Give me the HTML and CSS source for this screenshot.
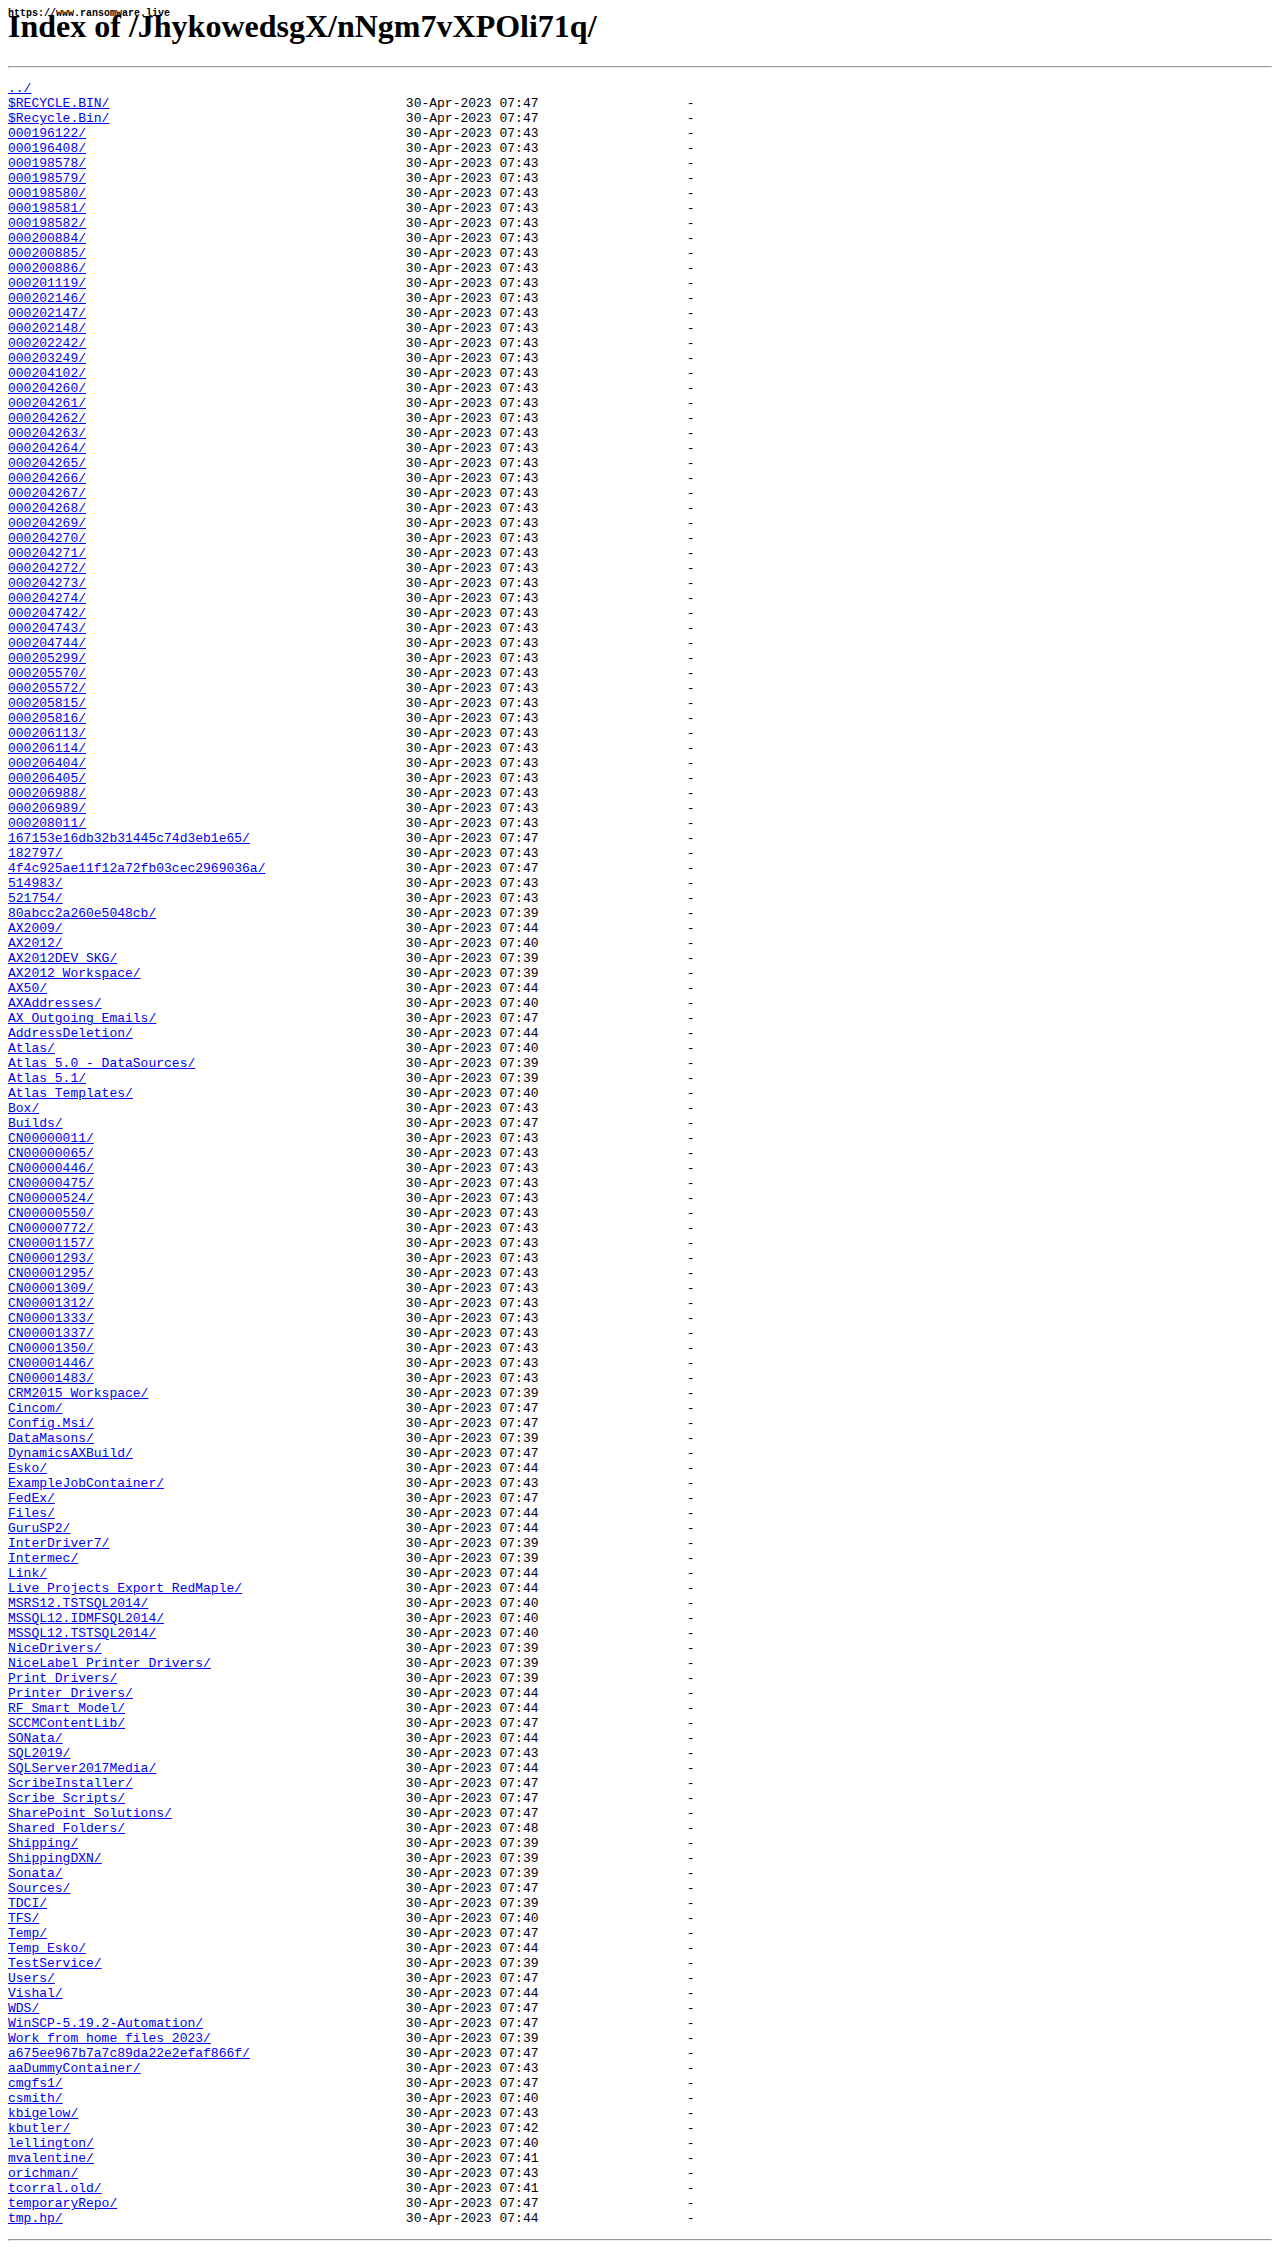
FILE: index.html
```html
<!DOCTYPE html>
<html lang="en">

<head>
    <meta charset="UTF-8">
    <title>Index of /JhykowedsgX/nNgm7vXPOli71q/</title>
    <link rel="stylesheet" href="styles.css">
</head>

<body>

    <div class="stamp">https://www.ransomware.live</div>

    <h1>Index of /JhykowedsgX/nNgm7vXPOli71q/</h1>
    <hr>

    <div class="listing">
        <div class="row"><a href="../">../</a></div>
        <div class="row"><a href="#">$RECYCLE.BIN/</a><span>30-Apr-2023 07:47</span><span class="size">-</span></div>
        <div class="row"><a href="#">$Recycle.Bin/</a><span>30-Apr-2023 07:47</span><span class="size">-</span></div>
        <div class="row"><a href="#">000196122/</a><span>30-Apr-2023 07:43</span><span class="size">-</span></div>
        <div class="row"><a href="#">000196408/</a><span>30-Apr-2023 07:43</span><span class="size">-</span></div>
        <div class="row"><a href="#">000198578/</a><span>30-Apr-2023 07:43</span><span class="size">-</span></div>
        <div class="row"><a href="#">000198579/</a><span>30-Apr-2023 07:43</span><span class="size">-</span></div>
        <div class="row"><a href="#">000198580/</a><span>30-Apr-2023 07:43</span><span class="size">-</span></div>
        <div class="row"><a href="#">000198581/</a><span>30-Apr-2023 07:43</span><span class="size">-</span></div>
        <div class="row"><a href="#">000198582/</a><span>30-Apr-2023 07:43</span><span class="size">-</span></div>
        <div class="row"><a href="#">000200884/</a><span>30-Apr-2023 07:43</span><span class="size">-</span></div>
        <div class="row"><a href="#">000200885/</a><span>30-Apr-2023 07:43</span><span class="size">-</span></div>
        <div class="row"><a href="#">000200886/</a><span>30-Apr-2023 07:43</span><span class="size">-</span></div>
        <div class="row"><a href="#">000201119/</a><span>30-Apr-2023 07:43</span><span class="size">-</span></div>
        <div class="row"><a href="#">000202146/</a><span>30-Apr-2023 07:43</span><span class="size">-</span></div>
        <div class="row"><a href="#">000202147/</a><span>30-Apr-2023 07:43</span><span class="size">-</span></div>
        <div class="row"><a href="#">000202148/</a><span>30-Apr-2023 07:43</span><span class="size">-</span></div>
        <div class="row"><a href="#">000202242/</a><span>30-Apr-2023 07:43</span><span class="size">-</span></div>
        <div class="row"><a href="#">000203249/</a><span>30-Apr-2023 07:43</span><span class="size">-</span></div>
        <div class="row"><a href="#">000204102/</a><span>30-Apr-2023 07:43</span><span class="size">-</span></div>
        <div class="row"><a href="#">000204260/</a><span>30-Apr-2023 07:43</span><span class="size">-</span></div>
        <div class="row"><a href="#">000204261/</a><span>30-Apr-2023 07:43</span><span class="size">-</span></div>
        <div class="row"><a href="#">000204262/</a><span>30-Apr-2023 07:43</span><span class="size">-</span></div>
        <div class="row"><a href="#">000204263/</a><span>30-Apr-2023 07:43</span><span class="size">-</span></div>
        <div class="row"><a href="#">000204264/</a><span>30-Apr-2023 07:43</span><span class="size">-</span></div>
        <div class="row"><a href="#">000204265/</a><span>30-Apr-2023 07:43</span><span class="size">-</span></div>
        <div class="row"><a href="#">000204266/</a><span>30-Apr-2023 07:43</span><span class="size">-</span></div>
        <div class="row"><a href="#">000204267/</a><span>30-Apr-2023 07:43</span><span class="size">-</span></div>
        <div class="row"><a href="#">000204268/</a><span>30-Apr-2023 07:43</span><span class="size">-</span></div>
        <div class="row"><a href="#">000204269/</a><span>30-Apr-2023 07:43</span><span class="size">-</span></div>
        <div class="row"><a href="#">000204270/</a><span>30-Apr-2023 07:43</span><span class="size">-</span></div>
        <div class="row"><a href="#">000204271/</a><span>30-Apr-2023 07:43</span><span class="size">-</span></div>
        <div class="row"><a href="#">000204272/</a><span>30-Apr-2023 07:43</span><span class="size">-</span></div>
        <div class="row"><a href="#">000204273/</a><span>30-Apr-2023 07:43</span><span class="size">-</span></div>
        <div class="row"><a href="#">000204274/</a><span>30-Apr-2023 07:43</span><span class="size">-</span></div>
        <div class="row"><a href="#">000204742/</a><span>30-Apr-2023 07:43</span><span class="size">-</span></div>
        <div class="row"><a href="#">000204743/</a><span>30-Apr-2023 07:43</span><span class="size">-</span></div>
        <div class="row"><a href="#">000204744/</a><span>30-Apr-2023 07:43</span><span class="size">-</span></div>
        <div class="row"><a href="#">000205299/</a><span>30-Apr-2023 07:43</span><span class="size">-</span></div>
        <div class="row"><a href="#">000205570/</a><span>30-Apr-2023 07:43</span><span class="size">-</span></div>
        <div class="row"><a href="#">000205572/</a><span>30-Apr-2023 07:43</span><span class="size">-</span></div>
        <div class="row"><a href="#">000205815/</a><span>30-Apr-2023 07:43</span><span class="size">-</span></div>
        <div class="row"><a href="#">000205816/</a><span>30-Apr-2023 07:43</span><span class="size">-</span></div>
        <div class="row"><a href="#">000206113/</a><span>30-Apr-2023 07:43</span><span class="size">-</span></div>
        <div class="row"><a href="#">000206114/</a><span>30-Apr-2023 07:43</span><span class="size">-</span></div>
        <div class="row"><a href="#">000206404/</a><span>30-Apr-2023 07:43</span><span class="size">-</span></div>
        <div class="row"><a href="#">000206405/</a><span>30-Apr-2023 07:43</span><span class="size">-</span></div>
        <div class="row"><a href="#">000206988/</a><span>30-Apr-2023 07:43</span><span class="size">-</span></div>
        <div class="row"><a href="#">000206989/</a><span>30-Apr-2023 07:43</span><span class="size">-</span></div>
        <div class="row"><a href="#">000208011/</a><span>30-Apr-2023 07:43</span><span class="size">-</span></div>
        <div class="row"><a href="#">167153e16db32b31445c74d3eb1e65/</a><span>30-Apr-2023 07:47</span><span class="size">-</span></div>
        <div class="row"><a href="#">182797/</a><span>30-Apr-2023 07:43</span><span class="size">-</span></div>
        <div class="row"><a href="#">4f4c925ae11f12a72fb03cec2969036a/</a><span>30-Apr-2023 07:47</span><span class="size">-</span></div>
        <div class="row"><a href="#">514983/</a><span>30-Apr-2023 07:43</span><span class="size">-</span></div>
        <div class="row"><a href="#">521754/</a><span>30-Apr-2023 07:43</span><span class="size">-</span></div>
        <div class="row"><a href="#">80abcc2a260e5048cb/</a><span>30-Apr-2023 07:39</span><span class="size">-</span></div>
        <div class="row"><a href="#">AX2009/</a><span>30-Apr-2023 07:44</span><span class="size">-</span></div>
        <div class="row"><a href="#">AX2012/</a><span>30-Apr-2023 07:40</span><span class="size">-</span></div>
        <div class="row"><a href="#">AX2012DEV SKG/</a><span>30-Apr-2023 07:39</span><span class="size">-</span></div>
        <div class="row"><a href="#">AX2012 Workspace/</a><span>30-Apr-2023 07:39</span><span class="size">-</span></div>
        <div class="row"><a href="#">AX50/</a><span>30-Apr-2023 07:44</span><span class="size">-</span></div>
        <div class="row"><a href="#">AXAddresses/</a><span>30-Apr-2023 07:40</span><span class="size">-</span></div>
        <div class="row"><a href="#">AX Outgoing Emails/</a><span>30-Apr-2023 07:47</span><span class="size">-</span></div>
        <div class="row"><a href="#">AddressDeletion/</a><span>30-Apr-2023 07:44</span><span class="size">-</span></div>
        <div class="row"><a href="#">Atlas/</a><span>30-Apr-2023 07:40</span><span class="size">-</span></div>
        <div class="row"><a href="#">Atlas 5.0 - DataSources/</a><span>30-Apr-2023 07:39</span><span class="size">-</span></div>
        <div class="row"><a href="#">Atlas 5.1/</a><span>30-Apr-2023 07:39</span><span class="size">-</span></div>
        <div class="row"><a href="#">Atlas Templates/</a><span>30-Apr-2023 07:40</span><span class="size">-</span></div>
        <div class="row"><a href="#">Box/</a><span>30-Apr-2023 07:43</span><span class="size">-</span></div>
        <div class="row"><a href="#">Builds/</a><span>30-Apr-2023 07:47</span><span class="size">-</span></div>
        <div class="row"><a href="#">CN00000011/</a><span>30-Apr-2023 07:43</span><span class="size">-</span></div>
        <div class="row"><a href="#">CN00000065/</a><span>30-Apr-2023 07:43</span><span class="size">-</span></div>
        <div class="row"><a href="#">CN00000446/</a><span>30-Apr-2023 07:43</span><span class="size">-</span></div>
        <div class="row"><a href="#">CN00000475/</a><span>30-Apr-2023 07:43</span><span class="size">-</span></div>
        <div class="row"><a href="#">CN00000524/</a><span>30-Apr-2023 07:43</span><span class="size">-</span></div>
        <div class="row"><a href="#">CN00000550/</a><span>30-Apr-2023 07:43</span><span class="size">-</span></div>
        <div class="row"><a href="#">CN00000772/</a><span>30-Apr-2023 07:43</span><span class="size">-</span></div>
        <div class="row"><a href="#">CN00001157/</a><span>30-Apr-2023 07:43</span><span class="size">-</span></div>
        <div class="row"><a href="#">CN00001293/</a><span>30-Apr-2023 07:43</span><span class="size">-</span></div>
        <div class="row"><a href="#">CN00001295/</a><span>30-Apr-2023 07:43</span><span class="size">-</span></div>
        <div class="row"><a href="#">CN00001309/</a><span>30-Apr-2023 07:43</span><span class="size">-</span></div>
        <div class="row"><a href="#">CN00001312/</a><span>30-Apr-2023 07:43</span><span class="size">-</span></div>
        <div class="row"><a href="#">CN00001333/</a><span>30-Apr-2023 07:43</span><span class="size">-</span></div>
        <div class="row"><a href="#">CN00001337/</a><span>30-Apr-2023 07:43</span><span class="size">-</span></div>
        <div class="row"><a href="#">CN00001350/</a><span>30-Apr-2023 07:43</span><span class="size">-</span></div>
        <div class="row"><a href="#">CN00001446/</a><span>30-Apr-2023 07:43</span><span class="size">-</span></div>
        <div class="row"><a href="#">CN00001483/</a><span>30-Apr-2023 07:43</span><span class="size">-</span></div>
        <div class="row"><a href="#">CRM2015 Workspace/</a><span>30-Apr-2023 07:39</span><span class="size">-</span></div>
        <div class="row"><a href="#">Cincom/</a><span>30-Apr-2023 07:47</span><span class="size">-</span></div>
        <div class="row"><a href="#">Config.Msi/</a><span>30-Apr-2023 07:47</span><span class="size">-</span></div>
        <div class="row"><a href="#">DataMasons/</a><span>30-Apr-2023 07:39</span><span class="size">-</span></div>
        <div class="row"><a href="#">DynamicsAXBuild/</a><span>30-Apr-2023 07:47</span><span class="size">-</span></div>
        <div class="row"><a href="#">Esko/</a><span>30-Apr-2023 07:44</span><span class="size">-</span></div>
        <div class="row"><a href="#">ExampleJobContainer/</a><span>30-Apr-2023 07:43</span><span class="size">-</span></div>
        <div class="row"><a href="#">FedEx/</a><span>30-Apr-2023 07:47</span><span class="size">-</span></div>
        <div class="row"><a href="#">Files/</a><span>30-Apr-2023 07:44</span><span class="size">-</span></div>
        <div class="row"><a href="#">GuruSP2/</a><span>30-Apr-2023 07:44</span><span class="size">-</span></div>
        <div class="row"><a href="#">InterDriver7/</a><span>30-Apr-2023 07:39</span><span class="size">-</span></div>
        <div class="row"><a href="#">Intermec/</a><span>30-Apr-2023 07:39</span><span class="size">-</span></div>
        <div class="row"><a href="#">Link/</a><span>30-Apr-2023 07:44</span><span class="size">-</span></div>
        <div class="row"><a href="#">Live Projects Export RedMaple/</a><span>30-Apr-2023 07:44</span><span class="size">-</span></div>
        <div class="row"><a href="#">MSRS12.TSTSQL2014/</a><span>30-Apr-2023 07:40</span><span class="size">-</span></div>
        <div class="row"><a href="#">MSSQL12.IDMFSQL2014/</a><span>30-Apr-2023 07:40</span><span class="size">-</span></div>
        <div class="row"><a href="#">MSSQL12.TSTSQL2014/</a><span>30-Apr-2023 07:40</span><span class="size">-</span></div>
        <div class="row"><a href="#">NiceDrivers/</a><span>30-Apr-2023 07:39</span><span class="size">-</span></div>
        <div class="row"><a href="#">NiceLabel Printer Drivers/</a><span>30-Apr-2023 07:39</span><span class="size">-</span></div>
        <div class="row"><a href="#">Print Drivers/</a><span>30-Apr-2023 07:39</span><span class="size">-</span></div>
        <div class="row"><a href="#">Printer Drivers/</a><span>30-Apr-2023 07:44</span><span class="size">-</span></div>
        <div class="row"><a href="#">RF Smart Model/</a><span>30-Apr-2023 07:44</span><span class="size">-</span></div>
        <div class="row"><a href="#">SCCMContentLib/</a><span>30-Apr-2023 07:47</span><span class="size">-</span></div>
        <div class="row"><a href="#">SONata/</a><span>30-Apr-2023 07:44</span><span class="size">-</span></div>
        <div class="row"><a href="#">SQL2019/</a><span>30-Apr-2023 07:43</span><span class="size">-</span></div>
        <div class="row"><a href="#">SQLServer2017Media/</a><span>30-Apr-2023 07:44</span><span class="size">-</span></div>
        <div class="row"><a href="#">ScribeInstaller/</a><span>30-Apr-2023 07:47</span><span class="size">-</span></div>
        <div class="row"><a href="#">Scribe Scripts/</a><span>30-Apr-2023 07:47</span><span class="size">-</span></div>
        <div class="row"><a href="#">SharePoint Solutions/</a><span>30-Apr-2023 07:47</span><span class="size">-</span></div>
        <div class="row"><a href="#">Shared Folders/</a><span>30-Apr-2023 07:48</span><span class="size">-</span></div>
        <div class="row"><a href="#">Shipping/</a><span>30-Apr-2023 07:39</span><span class="size">-</span></div>
        <div class="row"><a href="#">ShippingDXN/</a><span>30-Apr-2023 07:39</span><span class="size">-</span></div>
        <div class="row"><a href="#">Sonata/</a><span>30-Apr-2023 07:39</span><span class="size">-</span></div>
        <div class="row"><a href="#">Sources/</a><span>30-Apr-2023 07:47</span><span class="size">-</span></div>
        <div class="row"><a href="#">TDCI/</a><span>30-Apr-2023 07:39</span><span class="size">-</span></div>
        <div class="row"><a href="#">TFS/</a><span>30-Apr-2023 07:40</span><span class="size">-</span></div>
        <div class="row"><a href="#">Temp/</a><span>30-Apr-2023 07:47</span><span class="size">-</span></div>
        <div class="row"><a href="#">Temp Esko/</a><span>30-Apr-2023 07:44</span><span class="size">-</span></div>
        <div class="row"><a href="#">TestService/</a><span>30-Apr-2023 07:39</span><span class="size">-</span></div>
        <div class="row"><a href="#">Users/</a><span>30-Apr-2023 07:47</span><span class="size">-</span></div>
        <div class="row"><a href="#">Vishal/</a><span>30-Apr-2023 07:44</span><span class="size">-</span></div>
        <div class="row"><a href="#">WDS/</a><span>30-Apr-2023 07:47</span><span class="size">-</span></div>
        <div class="row"><a href="#">WinSCP-5.19.2-Automation/</a><span>30-Apr-2023 07:47</span><span class="size">-</span></div>
        <div class="row"><a href="#">Work from home files 2023/</a><span>30-Apr-2023 07:39</span><span class="size">-</span></div>
        <div class="row"><a href="#">a675ee967b7a7c89da22e2efaf866f/</a><span>30-Apr-2023 07:47</span><span class="size">-</span></div>
        <div class="row"><a href="#">aaDummyContainer/</a><span>30-Apr-2023 07:43</span><span class="size">-</span></div>
        <div class="row"><a href="#">cmgfs1/</a><span>30-Apr-2023 07:47</span><span class="size">-</span></div>
        <div class="row"><a href="#">csmith/</a><span>30-Apr-2023 07:40</span><span class="size">-</span></div>
        <div class="row"><a href="#">kbigelow/</a><span>30-Apr-2023 07:43</span><span class="size">-</span></div>
        <div class="row"><a href="#">kbutler/</a><span>30-Apr-2023 07:42</span><span class="size">-</span></div>
        <div class="row"><a href="#">lellington/</a><span>30-Apr-2023 07:40</span><span class="size">-</span></div>
        <div class="row"><a href="#">mvalentine/</a><span>30-Apr-2023 07:41</span><span class="size">-</span></div>
        <div class="row"><a href="#">orichman/</a><span>30-Apr-2023 07:43</span><span class="size">-</span></div>
        <div class="row"><a href="#">tcorral.old/</a><span>30-Apr-2023 07:41</span><span class="size">-</span></div>
        <div class="row"><a href="#">temporaryRepo/</a><span>30-Apr-2023 07:47</span><span class="size">-</span></div>
        <div class="row"><a href="#">tmp.hp/</a><span>30-Apr-2023 07:44</span><span class="size">-</span></div>
    </div>

    <hr>

</body>

</html>
```

FILE: styles.css
```css
body {
    margin: 8px;
    font-family: "Liberation Serif", serif;
    color: #000;
    background: #fff;
}

.stamp {
    position: absolute;
    top: 8px;
    left: 8px;
    font-family: "Liberation Mono", monospace;
    font-size: 10px;
    font-weight: bold;
    white-space: pre;
}

h1 {
    font-size: 32px;
    font-weight: bold;
    margin: 0 0 21.44px;
}

hr {
    margin: 8px 0;
}

.listing {
    margin: 13px 0;
    font-family: "Liberation Mono", monospace;
    font-size: 13px;
    line-height: 15px;
}

.row {
    display: grid;
    grid-template-columns: 51ch 17ch 20ch;
    white-space: pre;
}

.row a {
    color: #0000ee;
}

.size {
    text-align: right;
}
```
